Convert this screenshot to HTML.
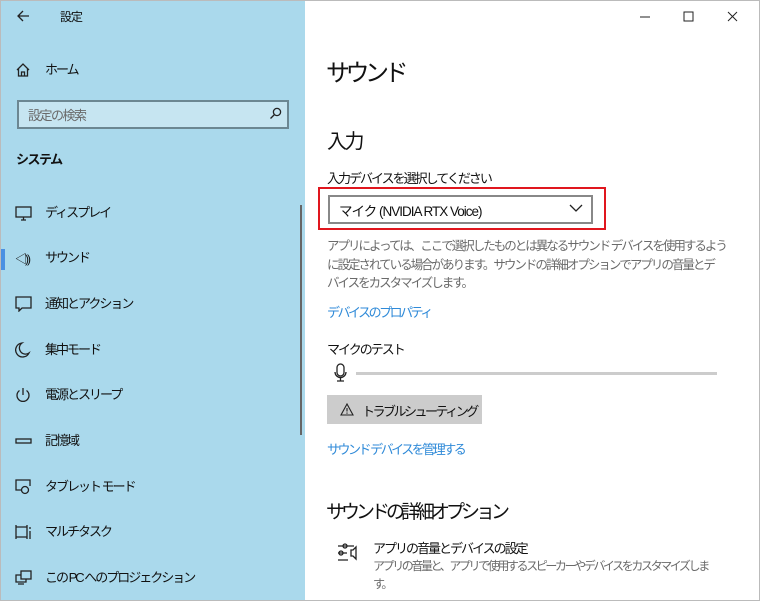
<!DOCTYPE html>
<html><head><meta charset="utf-8"><style>
*{margin:0;padding:0;box-sizing:border-box}
body{width:760px;height:601px;overflow:hidden;background:#fff;font-family:"Liberation Sans","Noto Sans CJK JP",sans-serif;color:#111;position:relative}
.a{position:absolute;white-space:nowrap}
#side{position:absolute;left:0;top:0;width:305px;height:601px;background:#aad9ec}
.it{position:absolute;left:45px;font-size:13px;line-height:20px;letter-spacing:-2px;white-space:nowrap}
.ic{position:absolute;left:15px}
svg{stroke:#222;fill:none;stroke-width:1.3}
.g{color:#6a6a6a}
.l{color:#2f8ad8}
</style></head><body>
<div style="position:absolute;inset:0;border:1px solid #bbb;pointer-events:none;z-index:9"></div>
<div id="side">
 <svg class="ic" style="left:16px;top:9px" width="14" height="14" viewBox="0 0 14 14"><path d="M13 7H2M7 2L2 7l5 5"/></svg>
 <div class="a" style="left:60px;top:8px;font-size:12px;letter-spacing:-1px">設定</div>
 <svg class="ic" style="top:62px" width="16" height="16" viewBox="0 0 16 16"><path d="M2 8L8 2l6 6M3.5 6.5V14h9V6.5M6.5 14V10h3v4"/></svg>
 <div class="it" style="top:60px">ホーム</div>
 <div class="a" style="left:17px;top:100px;width:272px;height:29px;border:2px solid #6c8792;background:#c6e5f1"></div>
 <div class="a g" style="left:28px;top:105px;font-size:13px;letter-spacing:-1.5px">設定の検索</div>
 <svg class="ic" style="left:269px;top:107px" width="13" height="13" viewBox="0 0 13 13"><circle cx="8" cy="5" r="3.6"/><path d="M5.5 7.5L1.5 11.5"/></svg>
 <div class="a" style="left:16px;top:149px;font-size:13px;font-weight:bold;letter-spacing:-1.5px">システム</div>
 <svg class="ic" style="top:205px" width="17" height="16" viewBox="0 0 17 16"><rect x="1" y="2" width="15" height="10"/><path d="M6 15h5M8.5 12v3"/></svg>
 <div class="it" style="top:203px">ディスプレイ</div>
 <div class="a" style="left:1px;top:249px;width:4px;height:21px;background:#4a90e2"></div>
 <div class="a" style="left:15px;top:250px;font-size:12px;letter-spacing:-2px">&#x25C1;))</div>
 <div class="it" style="top:248px">サウンド</div>
 <svg class="ic" style="top:296px" width="17" height="16" viewBox="0 0 17 16"><path d="M1 1h15v11H7l-3 3v-3H1z"/></svg>
 <div class="it" style="top:294px">通知とアクション</div>
 <svg class="ic" style="top:342px" width="16" height="16" viewBox="0 0 16 16"><path d="M7 1A7 7 0 1 0 14 11 6 6 0 0 1 7 1z"/></svg>
 <div class="it" style="top:340px">集中モード</div>
 <svg class="ic" style="top:387px" width="16" height="16" viewBox="0 0 16 16"><path d="M8 1v7M4.5 3.5a6 6 0 1 0 7 0"/></svg>
 <div class="it" style="top:385px">電源とスリープ</div>
 <svg class="ic" style="top:433px" width="17" height="16" viewBox="0 0 17 16"><rect x="1" y="6" width="15" height="4"/></svg>
 <div class="it" style="top:431px">記憶域</div>
 <svg class="ic" style="top:479px" width="17" height="16" viewBox="0 0 17 16"><path d="M6 11H1V1h14v6"/><circle cx="10" cy="11" r="3.5"/></svg>
 <div class="it" style="top:477px">タブレット モード</div>
 <svg class="ic" style="top:524px" width="17" height="16" viewBox="0 0 17 16"><path d="M1 1v14M12 1v14M1 3h11M1 13h11M15 3v2M15 7v8"/></svg>
 <div class="it" style="top:522px">マルチタスク</div>
 <svg class="ic" style="top:570px" width="17" height="16" viewBox="0 0 17 16"><rect x="6" y="1" width="10" height="8"/><path d="M6 5H1v7h10V9M3 14h6"/></svg>
 <div class="it" style="top:568px">この PC へのプロジェクション</div>
 <div class="a" style="left:300px;top:205px;width:2px;height:230px;background:#666"></div>
</div>
<svg style="position:absolute;left:640px;top:10px" width="110" height="14" viewBox="0 0 110 14"><path d="M0 7h10M44 2h9v9h-9zM88 2l9 9M97 2l-9 9" stroke="#222" stroke-width="1"/></svg>
<div class="a" style="left:326px;top:53px;font-size:24px;letter-spacing:-4.5px">サウンド</div>
<div class="a" style="left:327px;top:125px;font-size:20px;letter-spacing:-2.5px">入力</div>
<div class="a" style="left:327px;top:168px;font-size:13px;letter-spacing:-2px">入力デバイスを選択してください</div>
<div class="a" style="left:318px;top:187px;width:288px;height:43px;border:2px solid #e0161e"></div>
<div class="a" style="left:328px;top:195px;width:265px;height:29px;border:2px solid #888;background:#fff"></div>
<div class="a" style="left:339px;top:200px;font-size:13.5px;letter-spacing:-1px">マイク (NVIDIA RTX Voice)</div>
<svg style="position:absolute;left:569px;top:203px" width="14" height="10" viewBox="0 0 14 10"><path d="M1 2l6 6 6-6"/></svg>
<div class="a g" style="left:327px;top:237px;font-size:12.5px;line-height:18.5px;letter-spacing:-2px">アプリによっては、ここで選択したものとは異なるサウンド デバイスを使用するよう<br>に設定されている場合があります。サウンドの詳細オプションでアプリの音量とデ<br>バイスをカスタマイズします。</div>
<div class="a l" style="left:327px;top:302px;font-size:13px;letter-spacing:-2.5px">デバイスのプロパティ</div>
<div class="a" style="left:327px;top:339px;font-size:13px;letter-spacing:-2px">マイクのテスト</div>
<svg style="position:absolute;left:334px;top:363px" width="14" height="20" viewBox="0 0 14 20"><rect x="3" y="1" width="7" height="12" rx="3.5"/><path d="M1 9a5.5 5.5 0 0 0 11 0M6.5 15v3M3 18h7"/></svg>
<div class="a" style="left:356px;top:372px;width:361px;height:3px;background:#ccc"></div>
<div class="a" style="left:327px;top:395px;width:155px;height:29px;background:#ccc"></div>
<svg style="position:absolute;left:340px;top:403px" width="14" height="13" viewBox="0 0 14 13"><path d="M7 1L1 12h12zM7 5v3.5M7 9.5v1.2" stroke-width="1.1"/></svg>
<div class="a" style="left:362px;top:401px;font-size:13px;letter-spacing:-2.5px">トラブルシューティング</div>
<div class="a l" style="left:327px;top:439px;font-size:13px;letter-spacing:-2.5px">サウンド デバイスを管理する</div>
<div class="a" style="left:326px;top:497px;font-size:19px;letter-spacing:-4px">サウンドの詳細オプション</div>
<svg style="position:absolute;left:337px;top:542px" width="24" height="22" viewBox="0 0 24 22"><path d="M1 4h16M1 11h9M1 18h10"/><circle cx="8" cy="4" r="2"/><circle cx="4" cy="11" r="2"/><path d="M14 8v6h2l3 3V5l-3 3z"/></svg>
<div class="a" style="left:373px;top:538px;font-size:13px;letter-spacing:-2px">アプリの音量とデバイスの設定</div>
<div class="a g" style="left:373px;top:557px;font-size:12px;line-height:18px;letter-spacing:-2.4px">アプリの音量と、アプリで使用するスピーカーやデバイスをカスタマイズしま<br>す。</div>
</body></html>
